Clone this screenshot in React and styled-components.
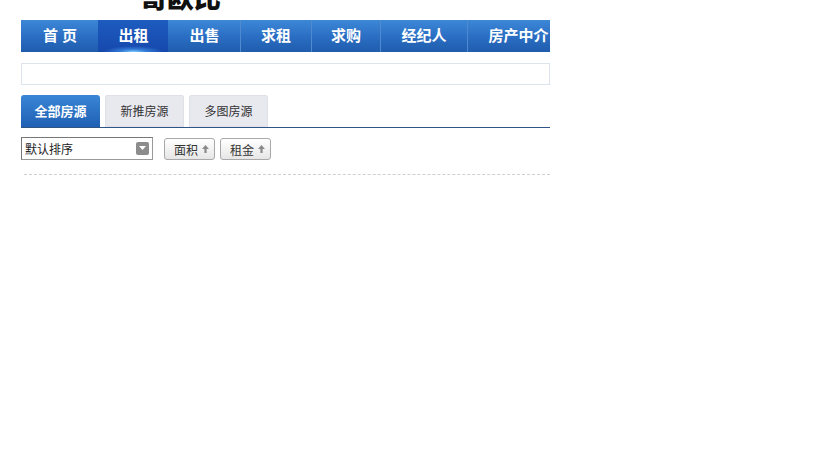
import React from 'react';
import styled, { createGlobalStyle } from 'styled-components';

const GlobalStyle = createGlobalStyle`
  body {
    margin: 0;
    background: #fff;
    font-family: "Liberation Sans", "Noto Sans CJK SC", sans-serif;
    font-size: 12px;
    color: #333;
  }
`;

const Page = styled.div`
  width: 529px;
  padding-left: 21px;
`;

const Header = styled.div`
  height: 20px;
  overflow: hidden;
`;

const Logo = styled.div`
  margin-top: -17px;
  padding-left: 119px;
  font-family: "Noto Sans CJK SC", sans-serif;
  font-size: 27px;
  line-height: 28px;
  font-weight: 900;
  color: #111;
`;

const Nav = styled.ul`
  display: flex;
  height: 32px;
  margin: 0;
  padding: 0;
  list-style: none;
  overflow: hidden;
  white-space: nowrap;
  background: linear-gradient(to bottom, #3d87d7 0%, #2b6fc4 50%, #1f5cad 100%);
`;

const NavItem = styled.li`
  flex: none;
  box-sizing: border-box;
  width: ${(p) => p.$w}px;
  line-height: 32px;
  text-align: center;
  font-family: "Liberation Sans", "Noto Sans CJK SC", sans-serif;
  font-size: 15px;
  font-weight: 700;
  color: #fff;
  border-left: 1px solid ${(p) => (p.$sep ? '#4f89cf' : 'transparent')};
  background: ${(p) =>
    p.$active
      ? 'radial-gradient(ellipse 30px 6px at 50% 100%, #7fd0ff 0%, rgba(80,170,255,0.5) 45%, rgba(20,70,170,0) 100%), linear-gradient(to bottom, #1e5cc0 0%, #1648ac 100%)'
      : 'transparent'};
`;

const Search = styled.div`
  height: 20px;
  margin-top: 11px;
  border: 1px solid #dce5ee;
  background: #fff;
`;

const Tabs = styled.div`
  display: flex;
  gap: 5px;
  margin-top: 10px;
  border-bottom: 1px solid #2e5585;
`;

const Tab = styled.div`
  width: 79px;
  height: 32px;
  line-height: 31px;
  text-align: center;
  font-family: "Noto Sans CJK SC", sans-serif;
  font-size: ${(p) => (p.$active ? '13px' : '12px')};
  border-radius: 3px 3px 0 0;
  font-weight: ${(p) => (p.$active ? 700 : 400)};
  color: ${(p) => (p.$active ? '#fff' : '#333')};
  background: ${(p) =>
    p.$active ? 'linear-gradient(to bottom, #3a86d6, #1f60b3)' : '#e8e8ef'};
  box-shadow: ${(p) => (p.$active ? 'none' : 'inset 0 0 0 1px #e0e0e8')};
`;

const Toolbar = styled.div`
  display: flex;
  align-items: center;
  gap: 5px;
  margin-top: 8px;
`;

const Select = styled.div`
  box-sizing: border-box;
  display: flex;
  align-items: center;
  justify-content: space-between;
  width: 132px;
  height: 23px;
  margin-right: 6px;
  padding: 0 3px 0 3px;
  border: 1px solid #999;
  border-top-color: #777;
  border-left-color: #777;
  background: #fff;
  font-family: "Noto Sans CJK SC", sans-serif;
  font-size: 12px;
  color: #222;
`;

const Caret = styled.span`
  display: flex;
  align-items: center;
  justify-content: center;
  width: 13px;
  height: 13px;
  border-radius: 2px;
  background: #8c8c8c;
`;

const SortButton = styled.div`
  box-sizing: border-box;
  display: flex;
  align-items: center;
  gap: 3px;
  height: 22px;
  padding: 0 4px 0 9px;
  border: 1px solid #a9a9a9;
  border-radius: 3px;
  background: linear-gradient(to bottom, #ffffff, #e6e6e6);
  font-family: "Noto Sans CJK SC", sans-serif;
  font-size: 12px;
  color: #333;
  margin-top: 2px;
`;

const Divider = styled.div`
  margin: 14px 0 0 3px;
  border-top: 1px dashed #cfcfcf;
`;

const navItems = [
  { label: '首 页', w: 77 },
  { label: '出租', w: 70, active: true },
  { label: '出售', w: 72 },
  { label: '求租', w: 71, sep: true },
  { label: '求购', w: 69, sep: true },
  { label: '经纪人', w: 87, sep: true },
  { label: '房产中介', w: 102, sep: true },
];

const UpArrow = () => (
  <svg width="9" height="10" viewBox="0 0 9 10">
    <path d="M4.5 1 L8 5 H5.6 V9 H3.4 V5 H1 Z" fill="#8a8a8a" />
  </svg>
);

const App = () => (
  <Page>
    <GlobalStyle />
    <Header>
      <Logo>哥欧比</Logo>
    </Header>
    <Nav>
      {navItems.map((item) => (
        <NavItem key={item.label} $w={item.w} $active={item.active} $sep={item.sep}>
          {item.label}
        </NavItem>
      ))}
    </Nav>
    <Search />
    <Tabs>
      <Tab $active>全部房源</Tab>
      <Tab>新推房源</Tab>
      <Tab>多图房源</Tab>
    </Tabs>
    <Toolbar>
      <Select>
        默认排序
        <Caret>
          <svg width="7" height="4" viewBox="0 0 7 4">
            <path d="M0 0 H7 L3.5 4 Z" fill="#fff" />
          </svg>
        </Caret>
      </Select>
      <SortButton>
        面积
        <UpArrow />
      </SortButton>
      <SortButton>
        租金
        <UpArrow />
      </SortButton>
    </Toolbar>
    <Divider />
  </Page>
);

export default App;
